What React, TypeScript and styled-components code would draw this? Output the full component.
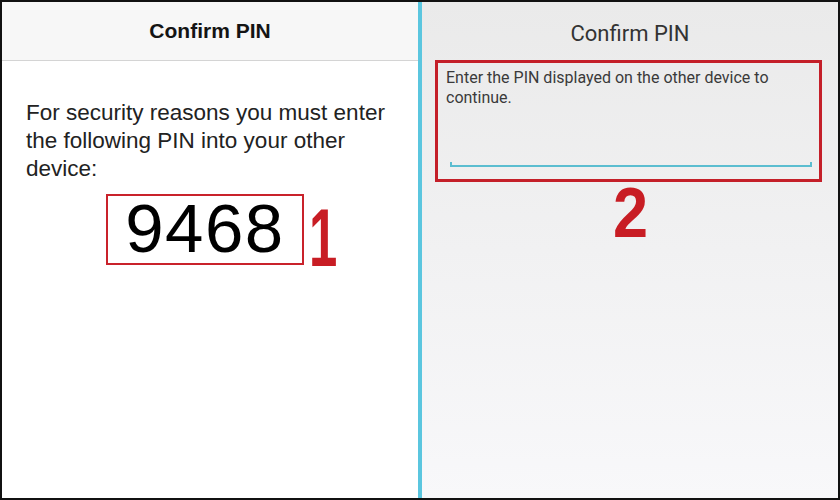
import styled, { createGlobalStyle } from 'styled-components';

const GlobalStyle = createGlobalStyle`
  html, body {
    margin: 0;
    padding: 0;
    background: #fff;
  }
  * {
    box-sizing: border-box;
  }
`;

const Frame = styled.div`
  width: 840px;
  height: 500px;
  border: 2px solid #111;
  display: grid;
  grid-template-columns: 1fr 4px 1fr;
  overflow: hidden;
`;

const Divider = styled.div`
  background: #5bc6df;
`;

const Screen = styled.section<{ $android?: boolean }>`
  display: flex;
  flex-direction: column;
  background: ${p => (p.$android ? 'linear-gradient(#eaeaea, #f8f8fa)' : '#fff')};
  min-width: 0;
`;

const IosHeader = styled.header`
  height: 59px;
  flex-shrink: 0;
  display: flex;
  align-items: center;
  justify-content: center;
  background: #f7f7f7;
  border-bottom: 1px solid #d4d4d4;
  font-family: 'Liberation Sans', Arial, sans-serif;
  font-weight: 700;
  font-size: 21px;
  color: #141414;
`;

const AndroidHeader = styled.header`
  height: 58px;
  flex-shrink: 0;
  display: flex;
  align-items: center;
  justify-content: center;
  padding-top: 4px;
  font-family: Roboto, 'Liberation Sans', sans-serif;
  font-size: 22px;
  color: #333;
`;

const Message = styled.p`
  margin: 38px 26px 0 24px;
  font-family: 'Liberation Sans', Arial, sans-serif;
  font-size: 22.5px;
  line-height: 28px;
  color: #222;
`;

const PinRow = styled.div`
  display: flex;
  justify-content: center;
  margin-top: 11px;
  padding-right: 10px;
`;

const PinBox = styled.div`
  position: relative;
  width: 198px;
  height: 71px;
  border: 2px solid #c9222b;
  display: flex;
  align-items: center;
  justify-content: center;
  font-family: 'Liberation Sans', Arial, sans-serif;
  font-size: 69px;
  letter-spacing: 1.5px;
  color: #000;
  line-height: 1;
  padding-bottom: 2px;
`;

const StepLabel = styled.span`
  font-family: 'Liberation Sans', Arial, sans-serif;
  font-weight: 700;
  color: #c81d24;
  line-height: 1;
`;

const OverlayStep = styled(StepLabel)`
  position: absolute;
  left: calc(100% + 7px);
  top: 1px;
  font-size: 82px;
  letter-spacing: 0;
  transform: scaleX(0.62);
  transform-origin: left center;
`;

const InputCard = styled.div`
  height: 122px;
  margin: 0 16px 0 13px;
  border: 3px solid #c41f29;
  display: flex;
  flex-direction: column;
  padding: 5px 7px 12px 8px;
`;

const Prompt = styled.p`
  margin: 0;
  font-family: Roboto, 'Liberation Sans', sans-serif;
  font-size: 16px;
  line-height: 20px;
  color: #3a3a3a;
`;

const EditLine = styled.div`
  margin: auto 0 0 4px;
  height: 5px;
  border: 2px solid #5bbdd0;
  border-top: none;
`;

const CenteredStep = styled(StepLabel)`
  align-self: center;
  font-size: 70px;
  margin-top: -4px;
  transform: scaleX(0.9);
`;

export default function App() {
  return (
    <>
      <GlobalStyle />
      <Frame>
        <Screen>
          <IosHeader>Confirm PIN</IosHeader>
          <Message>
            For security reasons you must enter the following PIN into your other device:
          </Message>
          <PinRow>
            <PinBox>
              9468
              <OverlayStep>1</OverlayStep>
            </PinBox>
          </PinRow>
        </Screen>
        <Divider />
        <Screen $android>
          <AndroidHeader>Confirm PIN</AndroidHeader>
          <InputCard>
            <Prompt>Enter the PIN displayed on the other device to continue.</Prompt>
            <EditLine />
          </InputCard>
          <CenteredStep>2</CenteredStep>
        </Screen>
      </Frame>
    </>
  );
}
